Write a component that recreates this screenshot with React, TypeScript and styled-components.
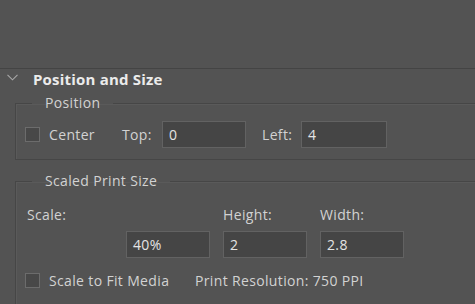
import React from "react";
import styled, { createGlobalStyle } from "styled-components";

const Global = createGlobalStyle`
  html, body { margin: 0; padding: 0; background: #535353; }
  body { font-family: "Open Sans", "Noto Sans", sans-serif; color: #cfcfcf; overflow: hidden; }
  * { box-sizing: border-box; }
`;

const Panel = styled.div`
  width: 475px;
  height: 304px;
  background: #535353;
  overflow: hidden;
  letter-spacing: 0.35px;
`;

const TopArea = styled.div`
  height: 69px;
  border-bottom: 1px solid #444444;
`;

const SectionHeader = styled.div`
  display: flex;
  align-items: center;
  height: 20px;
  padding-left: 7px;
`;

const Chevron = styled.svg`
  width: 11px;
  height: 7px;
  margin-right: 15px;
  margin-top: -3px;
`;

const Title = styled.span`
  font-size: 15px;
  font-weight: 700;
  color: #ebebeb;
  line-height: 18px;
  letter-spacing: 0.2px;
`;

const Group = styled.fieldset<{ $top: number }>`
  margin: ${(p) => p.$top}px 0 0 15px;
  padding: 0;
  min-width: 0;
  width: 480px;
  border: 1px solid #464646;
  border-right: none;
  box-shadow: inset 1px 1px 0 #5a5a5a;
`;

const Legend = styled.legend`
  margin-left: 16px;
  padding: 0 13px 0 13px;
  font-size: 14px;
  line-height: 16px;
  color: #d2d2d2;
`;

const PosRow = styled.div`
  display: flex;
  align-items: center;
  padding: 10px 0 11px 9px;
`;

const CheckGroup = styled.label<{ $w: number }>`
  display: flex;
  align-items: center;
  width: ${(p) => p.$w}px;
  font-size: 14px;
  color: #d2d2d2;
`;

const Box = styled.span`
  width: 15px;
  height: 15px;
  border: 1px solid #6c6c6c;
  background: #484848;
  margin-right: 9px;
  flex: none;
`;

const FieldLabel = styled.span<{ $w?: number; $ml?: number }>`
  display: inline-block;
  width: ${(p) => (p.$w ? `${p.$w}px` : "auto")};
  margin-left: ${(p) => p.$ml ?? 0}px;
  font-size: 14px;
  color: #d2d2d2;
`;

const Input = styled.div<{ $w: number }>`
  width: ${(p) => p.$w}px;
  height: 27px;
  background: #454545;
  border: 1px solid #626262;
  color: #e4e4e4;
  font-size: 14px;
  display: flex;
  align-items: center;
  padding-left: 6px;
`;

const ScaleGrid = styled.div`
  display: grid;
  grid-template-columns: 183px 84px 84px;
  column-gap: 13px;
  row-gap: 7px;
  padding: 17px 0 0 11px;
`;

const GridLabel = styled.span`
  font-size: 14px;
  color: #d2d2d2;
  line-height: 18px;
`;

const GridInput = styled(Input)`
  justify-self: end;
`;

const BottomRow = styled.div`
  display: flex;
  align-items: center;
  padding: 13px 0 20px 9px;
`;

const Info = styled.span`
  font-size: 14px;
  color: #d2d2d2;
`;

export default function App() {
  return (
    <Panel>
      <Global />
      <TopArea />
      <SectionHeader>
        <Chevron viewBox="0 0 11 7">
          <path d="M0.5 0.8 L5.5 5.8 L10.5 0.8" fill="none" stroke="#a8a8a8" strokeWidth="1.1" />
        </Chevron>
        <Title>Position and Size</Title>
      </SectionHeader>
      <Group $top={6}>
        <Legend>Position</Legend>
        <PosRow>
          <CheckGroup $w={97}>
            <Box />
            Center
          </CheckGroup>
          <FieldLabel $w={40}>Top:</FieldLabel>
          <Input $w={84}>0</Input>
          <FieldLabel $w={39} $ml={16}>Left:</FieldLabel>
          <Input $w={86}>4</Input>
        </PosRow>
      </Group>
      <Group $top={13}>
        <Legend>Scaled Print Size</Legend>
        <ScaleGrid>
          <GridLabel>Scale:</GridLabel>
          <GridLabel>Height:</GridLabel>
          <GridLabel>Width:</GridLabel>
          <GridInput $w={84}>40%</GridInput>
          <GridInput $w={84}>2</GridInput>
          <GridInput $w={84}>2.8</GridInput>
        </ScaleGrid>
        <BottomRow>
          <CheckGroup $w={170}>
            <Box />
            Scale to Fit Media
          </CheckGroup>
          <Info>Print Resolution: 750 PPI</Info>
        </BottomRow>
      </Group>
    </Panel>
  );
}
